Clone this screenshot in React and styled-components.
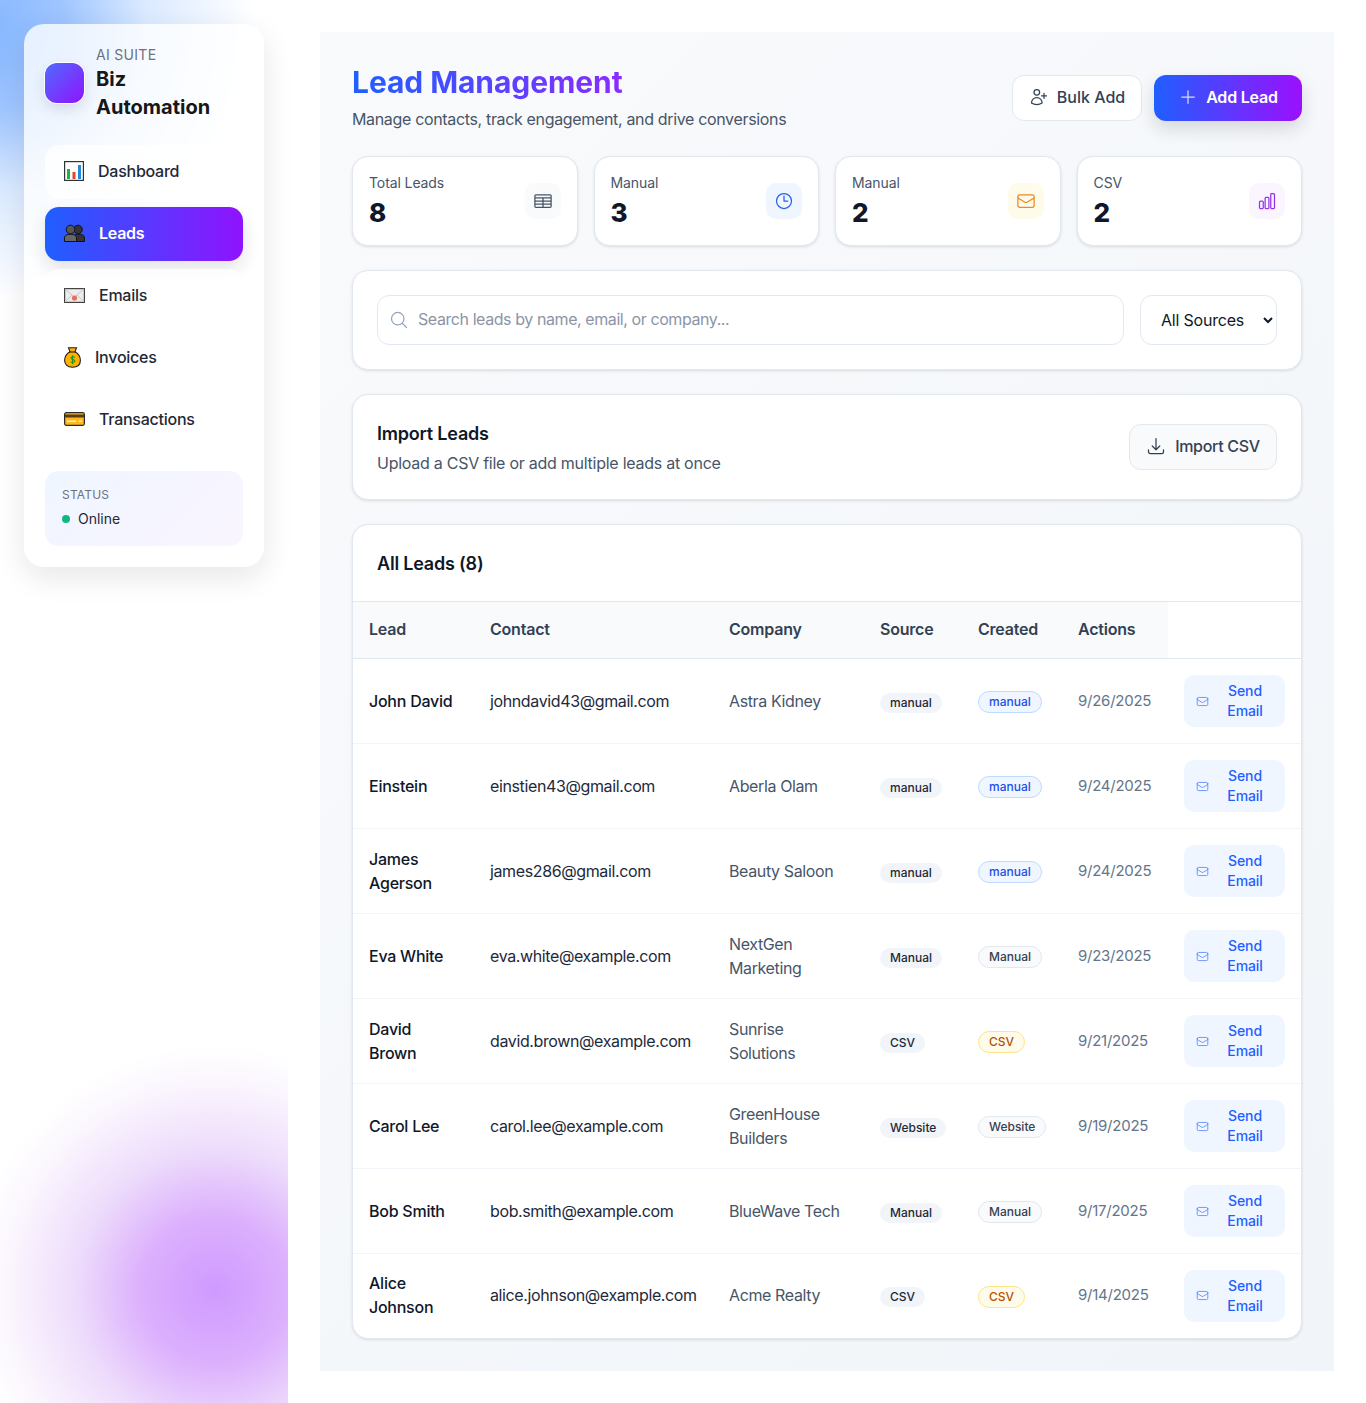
import React from 'react'
import styled, { createGlobalStyle } from 'styled-components'
import {
  HiOutlineArrowDownTray,
  HiOutlineChartBar,
  HiOutlineClock,
  HiOutlineEnvelope,
  HiOutlineMagnifyingGlass,
  HiOutlinePlus,
  HiOutlineTableCells,
  HiOutlineUserPlus,
} from 'react-icons/hi2'

const GlobalStyle = createGlobalStyle`
  * { box-sizing: border-box; }
  body {
    margin: 0;
    background: #fff;
    font-family: Inter, "Noto Sans", sans-serif;
    color: #0f172a;
  }
`

const Page = styled.div`
  display: flex;
  width: 1366px;
  min-height: 1403px;
  gap: 32px;
  padding-right: 32px;
`

const Aside = styled.aside`
  width: 288px;
  flex: none;
  padding: 24px;
  background:
    radial-gradient(circle 270px at -15px 30px, rgba(125, 178, 255, 0.95) 0%, rgba(135, 183, 255, 0.8) 30%, rgba(165, 203, 255, 0.4) 60%, rgba(205, 228, 255, 0) 100%),
    radial-gradient(circle 245px at 215px 1290px, #cf9aff 0%, #dcb0fd 30%, #eddcfb 57%, #fbf6fe 85%, rgba(255, 255, 255, 0) 100%);
`

const SideCard = styled.div`
  width: 240px;
  padding: 21px;
  border-radius: 20px;
  background: rgba(255, 255, 255, 0.78);
  box-shadow: 0 10px 30px rgba(15, 23, 42, 0.1);
`

const Brand = styled.div`
  display: flex;
  align-items: center;
  gap: 12px;
  margin-bottom: 24px;
`

const LogoMark = styled.div`
  width: 39px;
  height: 40px;
  flex: none;
  border-radius: 12px;
  background: linear-gradient(135deg, #4f6bff 0%, #9013fe 100%);
  box-shadow: 0 0 0 1px #fff, 0 6px 14px rgba(15, 23, 42, 0.12);
`

const BrandSmall = styled.div`
  font-size: 14px;
  line-height: 20px;
  letter-spacing: 0.3px;
  color: #6b7280;
`

const BrandName = styled.div`
  font-size: 20px;
  line-height: 28px;
  font-weight: 700;
  color: #171717;
`

const Nav = styled.nav`
  display: flex;
  flex-direction: column;
  gap: 8px;
`

const NavItem = styled.a`
  display: flex;
  align-items: center;
  gap: ${(p) => p.$gap}px;
  height: 54px;
  padding: 0 0 2px 19px;
  border-radius: 14px;
  font-size: 16px;
  letter-spacing: -0.25px;
  font-weight: ${(p) => (p.$active ? 600 : 500)};
  color: ${(p) => (p.$active ? '#fff' : '#1f2937')};
  background: ${(p) => (p.$active ? 'linear-gradient(90deg, #1f5fff 0%, #9013fe 100%)' : 'rgba(255, 255, 255, 0.75)')};
  box-shadow: ${(p) => (p.$active ? '0 8px 18px rgba(15, 23, 42, 0.12)' : 'none')};
`

const StatusBox = styled.div`
  margin-top: 24px;
  height: 75px;
  padding: 16px 17px;
  border-radius: 14px;
  background: linear-gradient(135deg, #eff6ff 0%, #faf5ff 100%);
`

const StatusLabel = styled.div`
  font-size: 12px;
  line-height: 16px;
  letter-spacing: 0.2px;
  color: #6b7280;
`

const StatusRow = styled.div`
  display: flex;
  align-items: center;
  gap: 8px;
  margin-top: 6px;
  font-size: 14px;
  line-height: 20px;
  color: #1f2937;
`

const Dot = styled.span`
  width: 8px;
  height: 8px;
  border-radius: 50%;
  background: #10b981;
`

const Main = styled.main`
  width: 1014px;
  margin: 32px 0;
  padding: 32px;
  background: linear-gradient(135deg, #f9fafc 0%, #f1f5f9 100%);
`

const Header = styled.header`
  display: flex;
  align-items: center;
  justify-content: space-between;
  height: 68px;
  margin-bottom: 24px;
`

const HeadText = styled.div`
  align-self: flex-start;
`

const Title = styled.h1`
  margin: 0 0 7px;
  font-size: 30px;
  line-height: 36px;
  font-weight: 700;
  letter-spacing: -0.08px;
  width: max-content;
  background: linear-gradient(90deg, #1f5fff 0%, #8a2bff 100%);
  -webkit-background-clip: text;
  background-clip: text;
  color: transparent;
`

const Subtitle = styled.p`
  margin: 0;
  font-size: 16px;
  line-height: 24px;
  letter-spacing: -0.34px;
  color: #475569;
`

const Actions = styled.div`
  display: flex;
  gap: 12px;
`

const GhostButton = styled.button`
  display: flex;
  align-items: center;
  justify-content: center;
  gap: ${(p) => p.$gap || 8}px;
  width: ${(p) => p.$w}px;
  height: 46px;
  padding: 0 0 2px;
  border: 1px solid #e2e8f0;
  border-radius: 12px;
  background: ${(p) => p.$bg || '#fff'};
  font: 500 16px Inter, sans-serif;
  letter-spacing: ${(p) => p.$track || 0}px;
  color: #334155;
  svg { font-size: 20px; }
`

const PrimaryButton = styled.button`
  display: flex;
  align-items: center;
  justify-content: center;
  gap: 8px;
  width: 148px;
  height: 46px;
  padding: 0 0 2px;
  border: 0;
  border-radius: 12px;
  background: linear-gradient(90deg, #1f5fff 0%, #9b10fe 100%);
  font: 600 16px Inter, sans-serif;
  letter-spacing: -0.2px;
  color: #fff;
  box-shadow: 0 8px 18px rgba(15, 23, 42, 0.14);
  svg { font-size: 20px; opacity: 0.8; }
`

const StatGrid = styled.section`
  display: grid;
  grid-template-columns: repeat(4, 1fr);
  gap: 16px;
  margin-bottom: 24px;
`

const Card = styled.section`
  background: #fff;
  border: 1px solid #e2e8f0;
  border-radius: 16px;
  box-shadow: 0 1px 3px rgba(15, 23, 42, 0.12);
  margin-bottom: ${(p) => p.$mb ?? 24}px;
`

const StatCard = styled(Card)`
  display: flex;
  align-items: center;
  justify-content: space-between;
  height: 90px;
  padding: 0 16px;
  margin: 0;
`

const StatLabel = styled.div`
  font-size: 14px;
  line-height: 20px;
  letter-spacing: -0.1px;
  color: #475569;
`

const StatValue = styled.div`
  margin-top: 4px;
  font-size: 26px;
  line-height: 32px;
  font-weight: 800;
  color: #0f172a;
`

const StatIcon = styled.div`
  display: flex;
  align-items: center;
  justify-content: center;
  width: 36px;
  height: 36px;
  border-radius: 10px;
  background: ${(p) => p.$bg};
  color: ${(p) => p.$fg};
  font-size: 20px;
`

const FilterCard = styled(Card)`
  display: flex;
  gap: 16px;
  padding: 24px;
`

const SearchBox = styled.label`
  flex: 1;
  display: flex;
  align-items: center;
  gap: 9px;
  height: 50px;
  padding: 0 11px;
  border: 1px solid #e2e8f0;
  border-radius: 12px;
  color: #94a3b8;
  svg { font-size: 20px; flex: none; }
`

const SearchInput = styled.input`
  flex: 1;
  border: 0;
  outline: 0;
  padding: 0 0 2px;
  font: 400 16px Inter, sans-serif;
  letter-spacing: -0.42px;
  &::placeholder { color: #8b95a5; }
`

const SourceSelect = styled.select`
  width: 137px;
  height: 50px;
  padding: 0 8px 0 16px;
  border: 1px solid #e2e8f0;
  border-radius: 12px;
  background: #fff;
  font: 400 16px Inter, sans-serif;
  letter-spacing: -0.2px;
  color: #0f172a;
`

const ImportCard = styled(Card)`
  display: flex;
  align-items: center;
  justify-content: space-between;
  height: 106px;
  padding: 0 24px;
`

const CardTitle = styled.h2`
  margin: 0;
  font-size: 18px;
  line-height: 28px;
  font-weight: 600;
  letter-spacing: -0.2px;
  color: #0f172a;
`

const ImportText = styled.p`
  margin: 3px 0 0;
  font-size: 16px;
  line-height: 24px;
  letter-spacing: -0.26px;
  color: #475569;
`

const TableHead = styled.div`
  display: flex;
  align-items: center;
  height: 76px;
  padding: 1px 24px 0;
`

const Table = styled.table`
  width: 100%;
  table-layout: fixed;
  border-collapse: collapse;
`

const Th = styled.th`
  height: 57px;
  padding: 0 16px 2px;
  text-align: left;
  background: #f8fafc;
  border-top: 1px solid #e2e8f0;
  border-bottom: 1px solid #e2e8f0;
  font-size: 16px;
  font-weight: 600;
  letter-spacing: -0.22px;
  color: #334155;
`

const EmptyTh = styled(Th)`
  background: #fff;
`

const Row = styled.tr`
  border-bottom: 1px solid #f1f5f9;
  &:last-child { border-bottom: 0; }
  &:last-child td { height: 84px; }
`

const Td = styled.td`
  height: 85px;
  padding: 0 16px 1px;
  font-size: 16px;
  line-height: 24px;
  letter-spacing: ${(p) => (p.$weight ? -0.25 : -0.38)}px;
  font-weight: ${(p) => p.$weight || 400};
  color: ${(p) => p.$color || '#1e293b'};
`

const DateTd = styled(Td)`
  font-size: 15px;
  letter-spacing: -0.25px;
  color: #64748b;
`

const ActionTd = styled(Td)`
  padding: 0 16px;
`

const Badge = styled.span`
  display: inline-block;
  padding: 3px 10px;
  border-radius: 999px;
  font-size: 12px;
  line-height: 14px;
  letter-spacing: 0;
  font-weight: 500;
  color: #1f2937;
  background: #f1f5f9;
`

const toneMap = {
  blue: ['#eff6ff', '#bfdbfe', '#1f4fe8'],
  amber: ['#fffbeb', '#fde68a', '#b45309'],
  gray: ['#f8fafc', '#e2e8f0', '#374151'],
}

const OutlineBadge = styled(Badge)`
  background: ${(p) => toneMap[p.$tone][0]};
  border: 1px solid ${(p) => toneMap[p.$tone][1]};
  color: ${(p) => toneMap[p.$tone][2]};
`

const SendButton = styled.button`
  display: flex;
  align-items: center;
  gap: 8px;
  width: 101px;
  height: 52px;
  padding: 0 12px;
  border: 0;
  border-radius: 10px;
  background: #eff6ff;
  font: 500 14px/20px Inter, sans-serif;
  letter-spacing: -0.1px;
  color: #1f5fff;
  text-align: center;
  svg { font-size: 13px; flex: none; opacity: 0.75; }
`

const Glyph = styled.svg`
  display: block;
  flex: none;
`

const ChartGlyph = () => (
  <Glyph width="20" height="20" viewBox="0 0 20 20">
    <rect x="0.6" y="0.6" width="18.8" height="18.8" fill="#fff" stroke="#2d3436" strokeWidth="1.2" />
    <rect x="3" y="8" width="3" height="10" fill="#22b33c" />
    <rect x="8.5" y="11" width="3" height="7" fill="#e8452c" />
    <rect x="14" y="4" width="3" height="14" fill="#2389da" />
  </Glyph>
)

const PeopleGlyph = () => (
  <Glyph width="21" height="18" viewBox="0 0 21 18">
    <path d="M9 17.5v-3.5c0-2.2 2-3.8 6-3.8s5.500 1.600 5.500 3.800v3.500z" fill="#333" stroke="#111" />
    <circle cx="14" cy="5.500" r="4.300" fill="#333" stroke="#111" />
    <path d="M.5 17.500v-3.500c0-2.200 2-3.800 6-3.800s6 1.600 6 3.800v3.500z" fill="#666" stroke="#111" />
    <circle cx="6.500" cy="5.500" r="4.300" fill="#555" stroke="#111" />
  </Glyph>
)

const LetterGlyph = () => (
  <Glyph width="21" height="15" viewBox="0 0 21 15">
    <rect x="0.6" y="0.6" width="19.8" height="13.8" fill="#ececec" stroke="#444" strokeWidth="1.2" />
    <path d="M1 1l9.500 8L20 1M1 14l7-7M20 14l-7-7" fill="none" stroke="#c9c9c9" />
    <circle cx="10.500" cy="10" r="2.600" fill="#ef6a5e" />
  </Glyph>
)

const BagGlyph = () => (
  <Glyph width="17" height="21" viewBox="0 0 17 21">
    <path d="M4.500.8h8l-1.500 4c3.500 2 5.400 5 5.400 8.400 0 4.400-3 7-7.900 7S.6 17.600.6 13.200c0-3.400 1.900-6.400 5.400-8.400z" fill="#ffb000" stroke="#222" strokeWidth="1.1" />
    <path d="M5 5h7" stroke="#222" strokeWidth="1.1" />
    <path d="M10.800 10.500c-.5-1-3.800-1.200-3.800.6s3.800 1.200 3.800 3-3.600 1.600-4 .5M8.600 8.200v9" fill="none" stroke="#0b9a2a" strokeWidth="1.100" />
  </Glyph>
)

const CreditGlyph = () => (
  <Glyph width="21" height="14" viewBox="0 0 21 14">
    <rect x="0.6" y="0.6" width="19.800" height="12.800" rx="1.800" fill="#ffb81c" stroke="#2a2a2a" strokeWidth="1.200" />
    <rect x="1" y="2.500" width="19" height="3" fill="#5b3a12" />
    <rect x="3" y="8.500" width="9" height="1.400" fill="#fff2c4" />
    <rect x="15" y="8.500" width="3" height="1.400" fill="#fff2c4" />
  </Glyph>
)

const navItems = [
  { label: 'Dashboard', icon: <ChartGlyph />, gap: 14 },
  { label: 'Leads', icon: <PeopleGlyph />, gap: 14, active: true },
  { label: 'Emails', icon: <LetterGlyph />, gap: 14 },
  { label: 'Invoices', icon: <BagGlyph />, gap: 14 },
  { label: 'Transactions', icon: <CreditGlyph />, gap: 14 },
]

const stats = [
  { label: 'Total Leads', value: 8, icon: <HiOutlineTableCells />, bg: '#f8fafc', fg: '#475569' },
  { label: 'Manual', value: 3, icon: <HiOutlineClock />, bg: '#eff6ff', fg: '#2563eb' },
  { label: 'Manual', value: 2, icon: <HiOutlineEnvelope />, bg: '#fffbeb', fg: '#ea8a1f' },
  { label: 'CSV', value: 2, icon: <HiOutlineChartBar />, bg: '#faf5ff', fg: '#9333ea' },
]

const leads = [
  ['John David', 'johndavid43@gmail.com', 'Astra Kidney', 'manual', 'blue', '9/26/2025'],
  ['Einstein', 'einstien43@gmail.com', 'Aberla Olam', 'manual', 'blue', '9/24/2025'],
  ['James Agerson', 'james286@gmail.com', 'Beauty Saloon', 'manual', 'blue', '9/24/2025'],
  ['Eva White', 'eva.white@example.com', 'NextGen Marketing', 'Manual', 'gray', '9/23/2025'],
  ['David Brown', 'david.brown@example.com', 'Sunrise Solutions', 'CSV', 'amber', '9/21/2025'],
  ['Carol Lee', 'carol.lee@example.com', 'GreenHouse Builders', 'Website', 'gray', '9/19/2025'],
  ['Bob Smith', 'bob.smith@example.com', 'BlueWave Tech', 'Manual', 'gray', '9/17/2025'],
  ['Alice Johnson', 'alice.johnson@example.com', 'Acme Realty', 'CSV', 'amber', '9/14/2025'],
]

const columns = [121, 239, 151, 98, 100, 106, 133]
const headings = ['Lead', 'Contact', 'Company', 'Source', 'Created', 'Actions']

const App = () => (
  <Page>
    <GlobalStyle />
    <Aside>
      <SideCard>
        <Brand>
          <LogoMark />
          <div>
            <BrandSmall>AI SUITE</BrandSmall>
            <BrandName>Biz Automation</BrandName>
          </div>
        </Brand>
        <Nav>
          {navItems.map((item) => (
            <NavItem key={item.label} $active={item.active} $gap={item.gap}>
              {item.icon}
              {item.label}
            </NavItem>
          ))}
        </Nav>
        <StatusBox>
          <StatusLabel>STATUS</StatusLabel>
          <StatusRow><Dot />Online</StatusRow>
        </StatusBox>
      </SideCard>
    </Aside>
    <Main>
      <Header>
        <HeadText>
          <Title>Lead Management</Title>
          <Subtitle>Manage contacts, track engagement, and drive conversions</Subtitle>
        </HeadText>
        <Actions>
          <GhostButton $w={130}><HiOutlineUserPlus />Bulk Add</GhostButton>
          <PrimaryButton><HiOutlinePlus />Add Lead</PrimaryButton>
        </Actions>
      </Header>

      <StatGrid>
        {stats.map((s, i) => (
          <StatCard key={i}>
            <div>
              <StatLabel>{s.label}</StatLabel>
              <StatValue>{s.value}</StatValue>
            </div>
            <StatIcon $bg={s.bg} $fg={s.fg}>{s.icon}</StatIcon>
          </StatCard>
        ))}
      </StatGrid>

      <FilterCard>
        <SearchBox>
          <HiOutlineMagnifyingGlass />
          <SearchInput placeholder="Search leads by name, email, or company..." />
        </SearchBox>
        <SourceSelect defaultValue="all">
          <option value="all">All Sources</option>
        </SourceSelect>
      </FilterCard>

      <ImportCard>
        <div>
          <CardTitle>Import Leads</CardTitle>
          <ImportText>Upload a CSV file or add multiple leads at once</ImportText>
        </div>
        <GhostButton $w={148} $bg="#f8fafc" $track={-0.3} $gap={9}><HiOutlineArrowDownTray />Import CSV</GhostButton>
      </ImportCard>

      <Card $mb={0}>
        <TableHead><CardTitle>All Leads (8)</CardTitle></TableHead>
        <Table>
          <colgroup>
            {columns.map((w, i) => <col key={i} width={w} />)}
          </colgroup>
          <thead>
            <tr>
              {headings.map((h) => <Th key={h}>{h}</Th>)}
              <EmptyTh />
            </tr>
          </thead>
          <tbody>
            {leads.map(([name, email, company, source, tone, date]) => (
              <Row key={email}>
                <Td $weight={500} $color="#0f172a">{name}</Td>
                <Td>{email}</Td>
                <Td $color="#475569">{company}</Td>
                <Td><Badge>{source}</Badge></Td>
                <Td><OutlineBadge $tone={tone}>{source}</OutlineBadge></Td>
                <DateTd>{date}</DateTd>
                <ActionTd>
                  <SendButton><HiOutlineEnvelope />Send Email</SendButton>
                </ActionTd>
              </Row>
            ))}
          </tbody>
        </Table>
      </Card>
    </Main>
  </Page>
)

export default App
